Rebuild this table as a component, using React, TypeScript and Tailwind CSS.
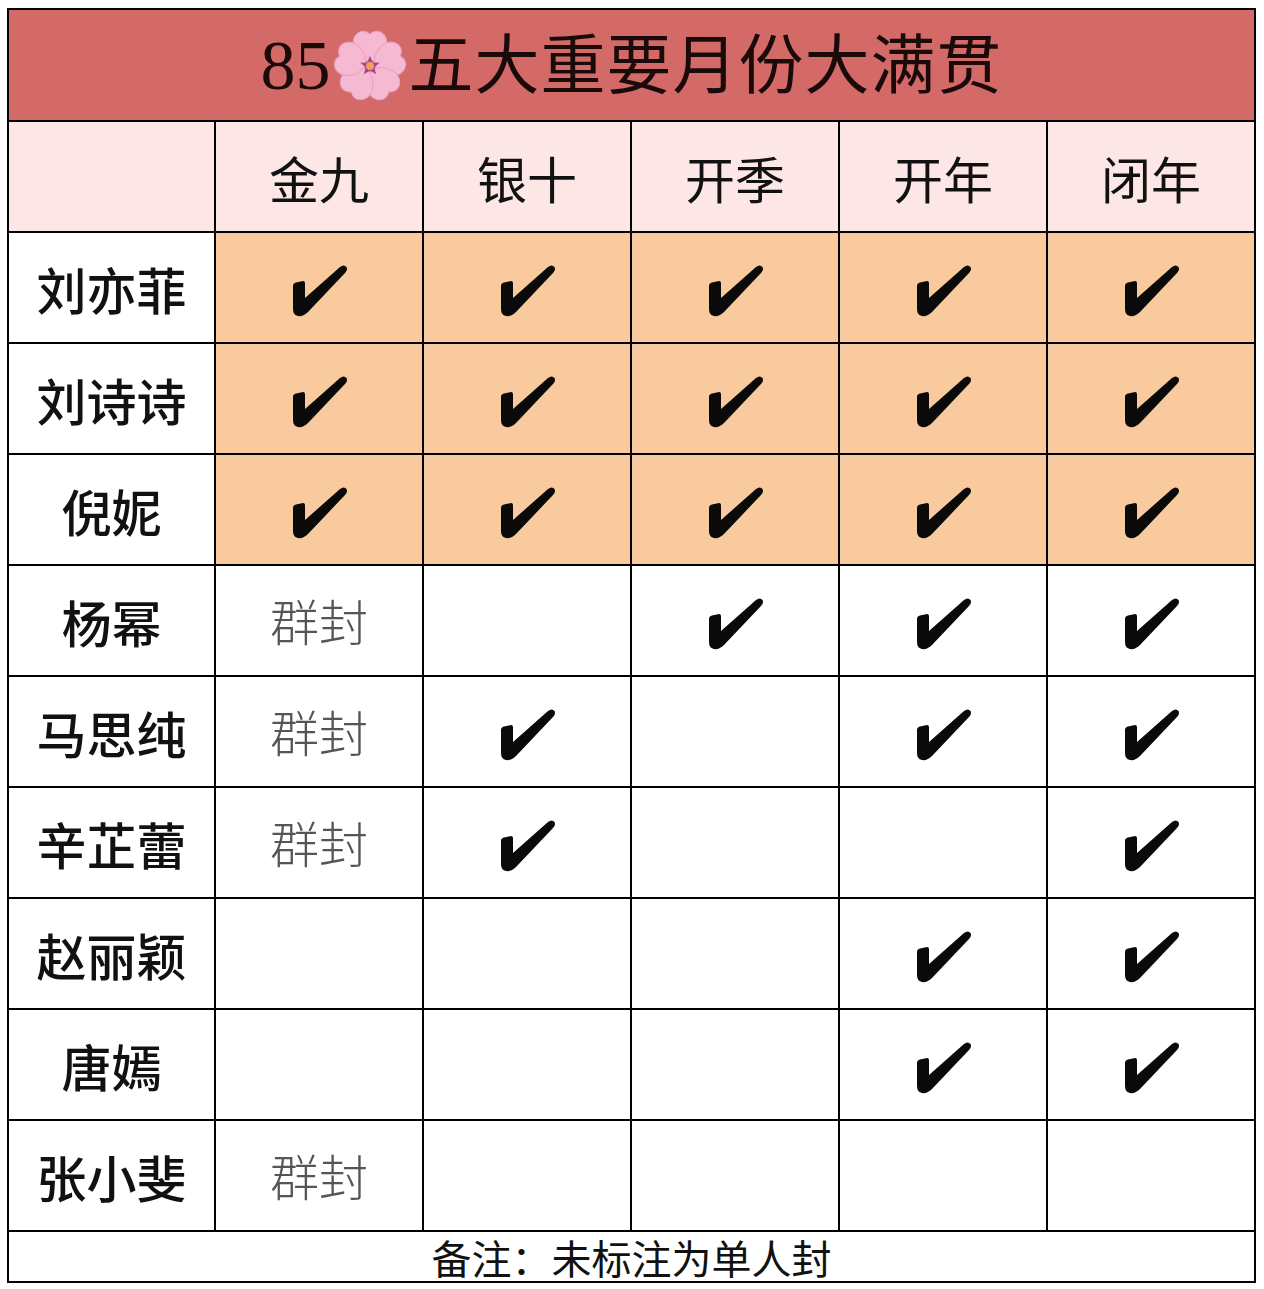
const months = ["金九", "银十", "开季", "开年", "闭年"];

type Row = { name: string; cells: (string | boolean)[]; full?: boolean };

const rows: Row[] = [
  { name: "刘亦菲", cells: [true, true, true, true, true], full: true },
  { name: "刘诗诗", cells: [true, true, true, true, true], full: true },
  { name: "倪妮", cells: [true, true, true, true, true], full: true },
  { name: "杨幂", cells: ["群封", false, true, true, true] },
  { name: "马思纯", cells: ["群封", true, false, true, true] },
  { name: "辛芷蕾", cells: ["群封", true, false, false, true] },
  { name: "赵丽颖", cells: [false, false, false, true, true] },
  { name: "唐嫣", cells: [false, false, false, true, true] },
  { name: "张小斐", cells: ["群封", false, false, false, false] },
];

function Check() {
  return (
    <svg width="56" height="52" viewBox="0 0 56 52" className="mx-auto mt-[6px]">
      <path
        d="M2 21 Q2 18 5 17.5 L12 16 Q14 16 14 18 L14 33 L49 2 Q53 -1 55.5 2 Q57 5 54 8 L17 47 Q12 52 7 51 Q2 50 2 44 Z"
        fill="#0a0a0a"
      />
    </svg>
  );
}

function Blossom() {
  const petals = [0, 72, 144, 216, 288];
  return (
    <svg width="76" height="76" viewBox="-37 -37 74 74" className="mx-[1px]">
      {petals.map((a) => (
        <g key={a} transform={`rotate(${a})`}>
          <path
            d="M0 -4 C-14 -8 -20 -22 -14 -30 C-10 -35 -4 -35 0 -31 C4 -35 10 -35 14 -30 C20 -22 14 -8 0 -4 Z"
            fill="#f6b9d2"
            stroke="#eaa0c0"
            strokeWidth="1"
          />
        </g>
      ))}
      <path
        d="M0 -10 L2.6 -3.5 L9.5 -3.1 L4.2 1.3 L5.9 8.1 L0 4.3 L-5.9 8.1 L-4.2 1.3 L-9.5 -3.1 L-2.6 -3.5 Z"
        fill="#b0418a"
      />
      <circle cx="0" cy="0" r="3.8" fill="#f0a25a" />
    </svg>
  );
}

export default function App() {
  return (
    <main className="min-h-[1289px] bg-white pt-[8px] pl-[7px]">
      <table
        className="border-collapse border-2 border-black table-fixed"
        style={{ width: 1249 }}
      >
        <colgroup>
          <col className="w-[207px]" />
          {months.map((m) => (
            <col key={m} className="w-[208px]" />
          ))}
        </colgroup>
        <tbody>
          {/* title */}
          <tr className="h-[112px] bg-[#d36a67]">
            <td colSpan={6} className="border-2 border-black p-0">
              <div className="flex items-center justify-center pt-[2px] text-[#1a0a0a]">
                <span className="text-[70px] leading-none font-['Liberation_Serif',serif]">85</span>
                <Blossom />
                <span className="text-[65px] leading-none tracking-[1px] font-['Liberation_Serif','Noto_Sans_CJK_SC',serif]">
                  五大重要月份大满贯
                </span>
              </div>
            </td>
          </tr>

          {/* header */}
          <tr className="h-[111px] bg-[#fde6e6]">
            <td className="border-2 border-black"></td>
            {months.map((m) => (
              <td
                key={m}
                className="border-2 border-black text-center text-[50px] leading-none font-['Noto_Sans_CJK_SC',sans-serif] text-[#111]"
              >
                {m}
              </td>
            ))}
          </tr>

          {rows.map((r) => (
            <tr key={r.name} className="h-[111px]">
              <td className="border-2 border-black bg-white text-center text-[50px] leading-none font-medium font-['Noto_Sans_CJK_SC',sans-serif] text-[#111]">
                {r.name}
              </td>
              {r.cells.map((c, i) => (
                <td
                  key={i}
                  className={`border-2 border-black text-center align-middle ${
                    r.full ? "bg-[#f9ca9e]" : "bg-white"
                  }`}
                >
                  {c === true ? (
                    <Check />
                  ) : typeof c === "string" ? (
                    <span className="text-[49px] leading-none font-light text-[#555] font-['Noto_Sans_CJK_SC',sans-serif]">
                      {c}
                    </span>
                  ) : null}
                </td>
              ))}
            </tr>
          ))}

          {/* footer */}
          <tr className="h-[51px] bg-white">
            <td
              colSpan={6}
              className="border-2 border-black text-center text-[40px] leading-none text-[#111] font-['Noto_Sans_CJK_SC',sans-serif]"
            >
              备注：未标注为单人封
            </td>
          </tr>
        </tbody>
      </table>
    </main>
  );
}
